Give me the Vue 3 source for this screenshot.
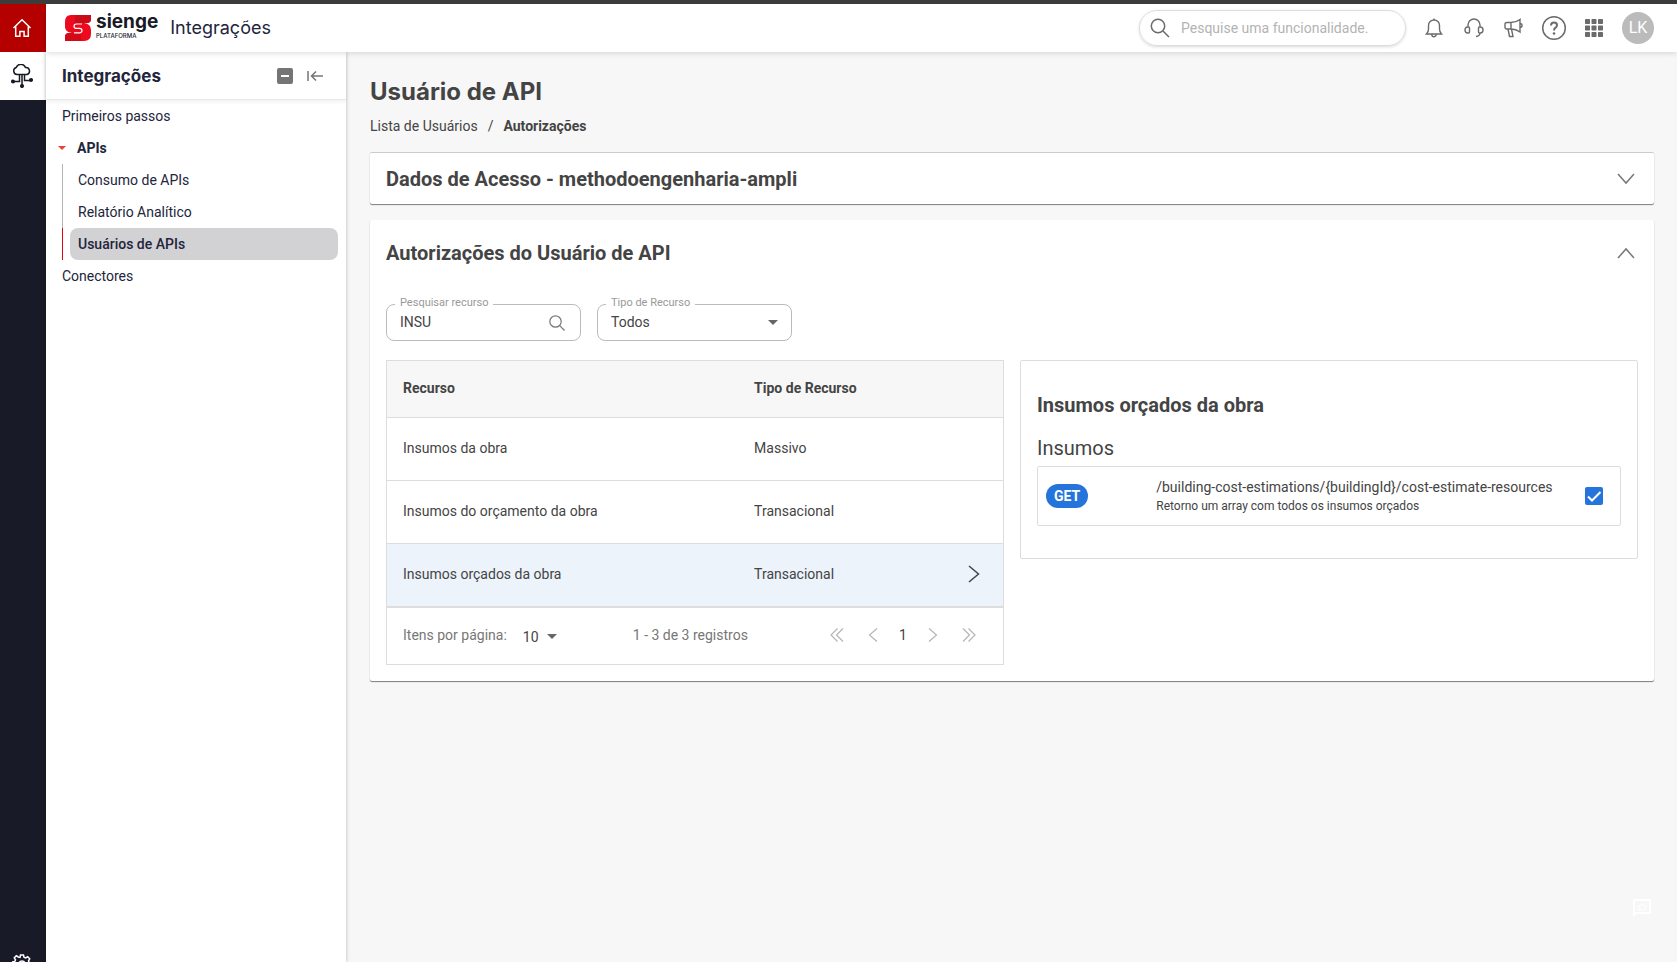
<script setup>
	import { computed, ref } from 'vue'

	defineOptions({
		name: 'ApiUserView',
	})

	const menu = ref([
		{ label: 'Consumo de APIs' },
		{ label: 'Relatório Analítico' },
		{ label: 'Usuários de APIs', active: true },
	])

	const resources = ref([
		{ name: 'Insumos da obra', type: 'Massivo' },
		{ name: 'Insumos do orçamento da obra', type: 'Transacional' },
		{ name: 'Insumos orçados da obra', type: 'Transacional' },
	])

	const endpoints = ref([
		{
			method: 'GET',
			path: '/building-cost-estimations/{buildingId}/cost-estimate-resources',
			description: 'Retorno um array com todos os insumos orçados',
			allowed: true,
		},
	])

	const search = ref('INSU')
	const type = ref('Todos')
	const pageSize = ref(10)
	const selected = ref('Insumos orçados da obra')
	const total = computed(() => resources.value.length)
</script>

<template>
	<div class="app">
		<nav class="rail">
			<a class="rail-item home" href="#" aria-label="Início">
				<svg width="20" height="20" viewBox="0 0 20 20" fill="none" stroke="currentColor" stroke-width="1.5">
					<path d="M1.5 10 10 1.8 18.5 10M3.7 8.5v9.7h4.2v-4.7h4.2v4.7h4.2V8.5" />
				</svg>
			</a>
			<a class="rail-item current" href="#" aria-label="Integrações">
				<svg width="22" height="24" viewBox="0 0 22 24" fill="none" stroke="currentColor" stroke-width="1.5">
					<path d="M6 10.5a3.6 3.6 0 0 1-.8-7A5 5 0 0 1 14.500 3.500a3.600 3.600 0 0 1 1.500 7zM11 11v10M8.500 11v6.500H2.500M13.500 11v5.500h6" />
					<circle cx="11" cy="22" r="1.300" fill="currentColor" />
					<circle cx="2" cy="17.500" r="1.300" fill="currentColor" />
					<circle cx="20" cy="16" r="1.300" fill="currentColor" />
				</svg>
			</a>
			<a class="rail-item settings" href="#" aria-label="Configurações">
				<svg width="20" height="20" viewBox="0 0 20 20" fill="none" stroke="currentColor" stroke-width="1.5">
					<path d="M8.500 1h3l.5 2.300 1.700.7 2-1.200 2 2-1.200 2 .7 1.700 2.300.5v3l-2.300.5-.7 1.700 1.200 2-2 2-2-1.200-1.700.7-.5 2.300h-3L8 16.700 6.300 16l-2 1.200-2-2 1.200-2-.7-1.700L.5 11V8l2.300-.5.7-1.700-1.200-2 2-2 2 1.200L8 3.300z" />
					<circle cx="10" cy="10" r="3" />
				</svg>
			</a>
		</nav>

		<header class="topbar">
			<svg class="logo-mark" width="26" height="27" viewBox="0 0 26 27" fill="none">
				<path d="M6 0h20v4q0 4-4 4h-3q7 1 7 7v4q0 7-7 7H0v-4q0-4 4-4h3q-7-1-7-6V7q0-7 6-7z" fill="#ee0a1e" />
				<path d="M10 0h16v4q0 4-4 4H10z" fill="#c90d18" />
				<path d="M0 22q0-4 4-4h12v8H0z" fill="#d20a18" />
				<path d="M17 9h-5.500q-2.500 0-2.500 2.200t2.500 2.200h3q2.500 0 2.500 2.200t-2.500 2.200H9" stroke="#fff" stroke-width="1.2" />
			</svg>
			<div class="logo-text">
				<strong>sienge</strong>
				<span>PLATAFORMA</span>
			</div>
			<span class="module">Integrações</span>

			<label class="global-search">
				<svg width="20" height="20" viewBox="0 0 20 20" fill="none" stroke="currentColor" stroke-width="1.5">
					<circle cx="8" cy="8" r="6.700" />
					<path d="m13 13 6 6" />
				</svg>
				<input type="text" placeholder="Pesquise uma funcionalidade." aria-label="Pesquise uma funcionalidade." />
			</label>
			<div class="actions">
				<button type="button" aria-label="Notificações">
					<svg width="18" height="20" viewBox="0 0 18 20" fill="none" stroke="currentColor" stroke-width="1.400">
						<path d="M1.500 16h15c-1.500-1.500-2-3-2-5V7.500a5.500 5.500 0 0 0-11 0V11c0 2-.5 3.500-2 5zM9 2V.5M6.800 16.500a2.200 2.200 0 0 0 4.400 0" />
					</svg>
				</button>
				<button type="button" aria-label="Suporte">
					<svg width="20" height="20" viewBox="0 0 20 20" fill="none" stroke="currentColor" stroke-width="1.400">
						<path d="M4 9V7a6 6 0 0 1 12 0v2M4.500 9H3.800Q1 9 1 12t2.800 3h.7q1 0 1-1v-4q0-1-1-1zM15.500 9h.7Q19 9 19 12t-2.800 3h-.7q-1 0-1-1v-4q0-1 1-1zM16 15q0 3-4 3.500" />
					</svg>
				</button>
				<button type="button" aria-label="Novidades">
					<svg width="20" height="20" viewBox="0 0 20 20" fill="none" stroke="currentColor" stroke-width="1.400">
						<path d="M7 4.500H3q-2 0-2 1.500v3q0 2 2 2h4zM7 4.500q5 0 9-3v12.500q-4-3-9-3M16 5.500q2 0 2 2t-2 2M4 11l1.500 7.500H9L7.500 11" />
					</svg>
				</button>
				<button type="button" aria-label="Ajuda">
					<svg width="26" height="26" viewBox="0 0 26 26" fill="none" stroke="currentColor" stroke-width="1.5">
						<circle cx="13" cy="13" r="11.300" />
						<path d="M10 10.500Q10 7.500 13 7.500t3 2.700q0 1.500-1.500 2.500T13 15.500" stroke-width="2" />
						<circle cx="13" cy="18.500" r="1.300" fill="currentColor" stroke="none" />
					</svg>
				</button>
				<button type="button" aria-label="Aplicativos">
					<svg width="18" height="18" viewBox="0 0 18 18" fill="currentColor">
						<template v-for="r in 3" :key="r">
							<rect v-for="c in 3" :key="c" :x="(c - 1) * 6.5" :y="(r - 1) * 6.5" width="5" height="5" rx="0.700" />
						</template>
					</svg>
				</button>
				<button class="avatar" type="button">LK</button>
			</div>
		</header>

		<aside class="sidebar">
			<div class="sidebar-head">
				<h2>Integrações</h2>
				<button type="button" aria-label="Recolher itens">
					<svg width="16" height="16" viewBox="0 0 16 16">
						<rect width="16" height="16" rx="2" fill="currentColor" />
						<path d="M4 8h8" stroke="#fff" stroke-width="2" />
					</svg>
				</button>
				<button type="button" aria-label="Fechar menu">
					<svg width="16" height="12" viewBox="0 0 16 12" fill="none" stroke="currentColor" stroke-width="1.5">
						<path d="M1 1v10M16 6H5M9 1.500 4.500 6 9 10.500" />
					</svg>
				</button>
			</div>
			<a class="menu-item" href="#">Primeiros passos</a>
			<a class="menu-item parent" href="#">APIs</a>
			<div v-for="item in menu" :key="item.label" class="submenu" :class="{ active: item.active }">
				<a href="#">{{ item.label }}</a>
			</div>
			<a class="menu-item" href="#">Conectores</a>
		</aside>

		<main class="content">
			<h1>Usuário de API</h1>
			<div class="breadcrumb">
				<a href="#">Lista de Usuários</a>
				<span>/</span>
				<strong>Autorizações</strong>
			</div>

			<section class="card closed">
				<button class="card-head" type="button">
					Dados de Acesso - methodoengenharia-ampli
					<svg width="18" height="12" viewBox="0 0 18 12" fill="none" stroke="currentColor" stroke-width="1.5">
						<path d="m1 1 8 9 8-9" />
					</svg>
				</button>
			</section>

			<section class="card">
				<button class="card-head open" type="button">
					Autorizações do Usuário de API
					<svg width="18" height="12" viewBox="0 0 18 12" fill="none" stroke="currentColor" stroke-width="1.5">
						<path d="m1 11 8-9 8 9" />
					</svg>
				</button>

				<div class="filters">
					<div class="field">
						<label for="search">Pesquisar recurso</label>
						<input id="search" v-model="search" type="text" />
						<svg width="16" height="16" viewBox="0 0 16 16" fill="none" stroke="currentColor" stroke-width="1.200">
							<circle cx="6.500" cy="6.500" r="5.700" />
							<path d="m10.700 10.700 4.800 4.800" />
						</svg>
					</div>
					<div class="field">
						<label for="type">Tipo de Recurso</label>
						<select id="type" v-model="type">
							<option>Todos</option>
						</select>
						<i class="caret"></i>
					</div>
				</div>

				<div class="columns">
					<div class="grid">
						<table>
							<thead>
								<tr>
									<th class="col-name">Recurso</th>
									<th>Tipo de Recurso</th>
									<th class="col-arrow"></th>
								</tr>
							</thead>
							<tbody>
								<tr
									v-for="row in resources"
									:key="row.name"
									:class="{ selected: row.name === selected }"
									@click="selected = row.name">
									<td>{{ row.name }}</td>
									<td>{{ row.type }}</td>
									<td>
										<svg v-if="row.name === selected" width="12" height="18" viewBox="0 0 12 18" fill="none" stroke="currentColor" stroke-width="1.5">
											<path d="m1 1 9.500 8L1 17" />
										</svg>
									</td>
								</tr>
							</tbody>
						</table>
						<div class="pager">
							<label for="page-size">Itens por página:</label>
							<div class="page-size">
								<select id="page-size" v-model="pageSize">
									<option :value="10">10</option>
								</select>
								<i class="caret"></i>
							</div>
							<span class="range">1 - {{ total }} de {{ total }} registros</span>
							<div class="pages">
								<button type="button" aria-label="Primeira página">
									<svg width="14" height="14" viewBox="0 0 14 14"><path d="M7.500.5 1 7l6.500 6.500M13 .5 6.500 7l6.500 6.500" /></svg>
								</button>
								<button type="button" aria-label="Página anterior">
									<svg width="14" height="14" viewBox="0 0 14 14"><path d="M11 .5 3.500 7l7.500 6.500" /></svg>
								</button>
								<button class="page" type="button">1</button>
								<button type="button" aria-label="Próxima página">
									<svg width="14" height="14" viewBox="0 0 14 14"><path d="M3 .5 10.500 7 3 13.500" /></svg>
								</button>
								<button type="button" aria-label="Última página">
									<svg width="14" height="14" viewBox="0 0 14 14"><path d="M1 .5 7.500 7 1 13.500M6.500.5 13 7l-6.500 6.500" /></svg>
								</button>
							</div>
						</div>
					</div>

					<div class="detail">
						<h3>{{ selected }}</h3>
						<h4>Insumos</h4>
						<label v-for="item in endpoints" :key="item.path" class="endpoint">
							<span class="method">{{ item.method }}</span>
							<span class="info">
								<span>{{ item.path }}</span>
								<small>{{ item.description }}</small>
							</span>
							<input v-model="item.allowed" type="checkbox" />
							<svg class="tick" width="18" height="18" viewBox="0 0 18 18" fill="none" stroke="#fff" stroke-width="2">
								<path d="m3 9.500 4 4L15.500 5" />
							</svg>
						</label>
					</div>
				</div>
			</section>
		</main>

		<button class="feedback" type="button" aria-label="Feedback">
			<svg width="18" height="18" viewBox="0 0 18 18" fill="none" stroke="currentColor">
				<path d="M1 16V1h16v13H3z" stroke-width="2" />
				<path d="M5 7h2v4H5zM7 7l3-3v3h3l-1 4H7" />
			</svg>
		</button>
	</div>
</template>

<style>
	body {
		margin: 0;
		background: #f7f7f7;
	}
</style>

<style scoped>
	* {
		box-sizing: border-box;
	}

	.app {
		display: grid;
		grid-template: 48px 1fr / 46px 300px 1fr;
		height: 100vh;
		border-top: 4px solid #3c3c3c;
		overflow: hidden;

		color: #444;
		font: 14px/20px Roboto, 'Noto Sans', sans-serif;
	}

	a {
		color: inherit;
		text-decoration: none;
	}

	button {
		padding: 0;
		border: 0;
		background: none;
		color: inherit;
		font: inherit;
		cursor: pointer;
	}

	svg {
		display: block;
		flex: none;
	}

	input,
	select {
		min-width: 0;
		margin: 0;
		padding: 0;
		border: 0;
		outline: 0;
		background: none;
		color: inherit;
		font: inherit;
		appearance: none;
	}

	h1,
	h2,
	h3,
	h4 {
		margin: 0;
	}

	.rail {
		grid-row: 1 / 3;

		display: flex;
		flex-direction: column;
		min-height: 0;

		background: #191a27;
		color: #fff;

		.rail-item {
			flex: none;
			height: 48px;
			padding-right: 2px;

			display: flex;
			align-items: center;
			justify-content: center;
		}

		.home {
			background: #b50000;
		}

		.current {
			background: #fff;
			color: #191a27;
		}

		.settings {
			height: 8px;
			margin-top: auto;
			align-items: flex-start;
		}
	}

	.topbar {
		grid-column: 2 / 4;
		position: relative;
		z-index: 2;

		display: flex;
		align-items: center;
		padding: 0 23px 0 19px;

		background: #fff;
		box-shadow: 0 1px 6px rgba(0, 0, 0, 0.15);

		.logo-text {
			display: flex;
			flex-direction: column;
			margin: 0 12px 4px 5px;

			color: #191a27;
			font-family: Inter, sans-serif;

			strong {
				font-size: 19px;
				line-height: 20px;
			}

			span {
				font-size: 6px;
				line-height: 8px;
				font-weight: 500;
			}
		}

		.module {
			color: #22253b;
			font: 18px/24px Inter, sans-serif;
		}
	}

	.global-search {
		width: 267px;
		height: 36px;
		margin-left: auto;
		padding: 0 10px;

		display: flex;
		align-items: center;
		gap: 11px;

		border: 1px solid #ddd;
		border-radius: 18px;
		box-shadow: 0 1px 3px rgba(0, 0, 0, 0.15);
		color: #6b6b6b;

		input {
			flex: 1;
		}

		input::placeholder {
			color: #b3b3b3;
			opacity: 1;
		}
	}

	.actions {
		display: flex;
		margin-left: 8px;
		color: #6b6b6b;

		button {
			width: 40px;
			height: 32px;

			display: flex;
			align-items: center;
			justify-content: center;
		}

		.avatar {
			width: 32px;
			margin-left: 8px;

			border-radius: 50%;
			background: #bbb;
			color: #fff;
			font-size: 16px;
		}
	}

	.sidebar {
		position: relative;
		z-index: 1;

		background: #fff;
		box-shadow: 0 0 4px rgba(0, 0, 0, 0.25);
		color: #22253b;
	}

	.sidebar-head {
		height: 48px;
		padding: 0 23px 0 16px;

		display: flex;
		align-items: center;
		gap: 14px;

		border-bottom: 1px solid #e8e8e8;
		box-shadow: 0 2px 4px rgba(0, 0, 0, 0.06);

		h2 {
			flex: 1;
			font: 700 17px/24px Inter, sans-serif;
		}

		button {
			color: #757575;
		}
	}

	.menu-item {
		display: flex;
		align-items: center;
		height: 32px;
		padding-left: 16px;
	}

	.parent {
		gap: 11px;
		padding-left: 12px;
		font-weight: 700;
	}

	.parent::before {
		content: '';
		border: 4px solid transparent;
		border-top-color: #ee4036;
		border-bottom: 0;
	}

	.submenu {
		margin: 0 8px 0 16px;
		padding-left: 7px;
		border-left: 1px solid #b4b4b8;

		a {
			display: block;
			padding: 6px 8px;
			border-radius: 8px;
		}
	}

	.submenu.active {
		border-color: #e3000f;

		a {
			background: #d2d2d4;
			font-weight: 500;
		}
	}

	.content {
		min-width: 0;
		padding: 24px 23px 24px 24px;

		h1 {
			font: 700 24px/32px Inter, sans-serif;
		}
	}

	.breadcrumb {
		display: flex;
		gap: 10px;
		margin: 8px 0 16px;
	}

	.card {
		margin-bottom: 16px;
		padding: 0 16px 16px;

		border-radius: 2px;
		background: #fff;
		box-shadow: 0 1px 1px rgba(0, 0, 0, 0.5);
	}

	.closed {
		padding-bottom: 0;
		border-top: 1px solid #ccc;
	}

	.card-head {
		width: 100%;
		height: 51px;
		padding-right: 3px;

		display: flex;
		align-items: center;
		justify-content: space-between;

		font-size: 20px;
		font-weight: 700;

		svg {
			color: #777;
		}
	}

	.open {
		height: 66px;
	}

	.filters {
		display: flex;
		gap: 16px;
		padding: 18px 0 19px;
	}

	.field {
		position: relative;
		width: 195px;
		height: 37px;
		padding: 0 13px;

		display: flex;
		align-items: center;

		border: 1px solid #bbb;
		border-radius: 8px;

		label {
			position: absolute;
			top: -9px;
			left: 8px;
			padding: 0 5px;

			background: #fff;
			color: #999;
			font-size: 11px;
			line-height: 14px;
		}

		input,
		select {
			flex: 1;
			padding-bottom: 2px;
		}

		svg {
			margin-right: 2px;
			color: #777;
		}
	}

	.caret {
		border: 5px solid transparent;
		border-top-color: #666;
		border-bottom: 0;
	}

	.columns {
		display: grid;
		grid-template-columns: 1fr 1fr;
		align-items: start;
		gap: 16px;
	}

	.grid {
		border: 1px solid #ddd;
	}

	table {
		width: 100%;
		table-layout: fixed;
		border-collapse: collapse;
	}

	th,
	td {
		height: 63px;
		padding: 0 16px 2px;
		border-bottom: 1px solid #ddd;
		text-align: left;
	}

	th {
		height: 56px;
		background: #f7f7f7;
		font-weight: 700;
	}

	.col-name {
		width: 57%;
	}

	.col-arrow {
		width: 51px;
	}

	.selected {
		background: #ecf3fb;
	}

	.pager {
		height: 57px;
		padding: 0 16px 2px;

		display: flex;
		align-items: center;

		border-top: 1px solid #ddd;
		color: #777;
	}

	.page-size {
		display: flex;
		align-items: center;
		gap: 8px;
		margin: 4px 0 0 16px;
		color: #444;
	}

	.range {
		margin-left: 76px;
	}

	.pages {
		display: flex;
		margin-left: auto;

		button {
			width: 36px;
			height: 24px;

			display: flex;
			align-items: center;
			justify-content: center;
		}

		.page {
			width: 24px;
			color: #444;
		}

		svg {
			fill: none;
			stroke: #b5b5b5;
			stroke-width: 1.2;
		}
	}

	.detail {
		padding: 32px 16px;
		border: 1px solid #ddd;
		border-radius: 2px;

		h3 {
			font-size: 20px;
			line-height: 24px;
			font-weight: 700;
		}

		h4 {
			margin: 19px 0 6px;
			font-size: 20px;
			line-height: 24px;
			font-weight: 400;
		}
	}

	.endpoint {
		position: relative;
		height: 60px;
		padding: 0 17px 0 8px;

		display: flex;
		align-items: center;

		border: 1px solid #ddd;
		border-radius: 2px;

		.method {
			padding: 2px 8px;
			border-radius: 12px;
			background: #2474db;
			color: #fff;
			font-weight: 700;
		}

		.info {
			flex: 1;
			margin-left: 68px;

			display: flex;
			flex-direction: column;
		}

		small {
			font-size: 12px;
			line-height: 18px;
		}

		input {
			width: 18px;
			height: 18px;
			border-radius: 2px;
			box-shadow: inset 0 0 0 2px #757575;
		}

		input:checked {
			background: #2474db;
			box-shadow: none;
		}

		.tick {
			position: absolute;
			right: 17px;
			pointer-events: none;
		}
	}

	.feedback {
		position: fixed;
		right: 26px;
		bottom: 45px;
		color: #fff;
	}
</style>
